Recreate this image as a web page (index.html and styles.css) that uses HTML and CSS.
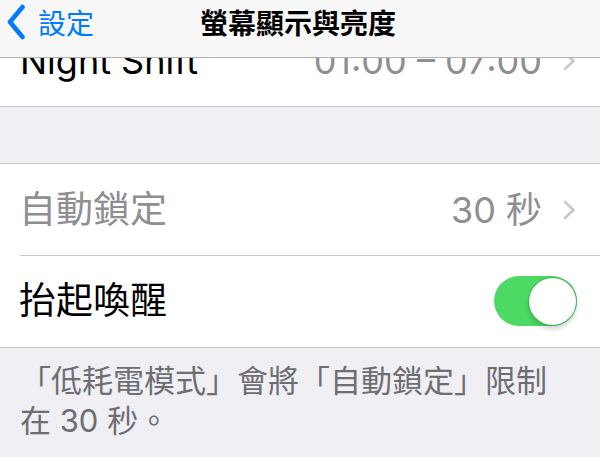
FILE: index.html
```html
<!DOCTYPE html>
<html lang="zh-Hant">
<head>
<meta charset="utf-8">
<title>螢幕顯示與亮度</title>
<link rel="stylesheet" href="styles.css">
</head>
<body>
<div class="screen">
  <header class="navbar">
    <a class="back" href="#">
      <svg class="back-chevron" width="20" height="36" viewBox="0 0 20 36" aria-hidden="true">
        <path d="M16.5 3 L4 18 L16.5 33" fill="none" stroke="#007aff" stroke-width="4.6" stroke-linecap="round" stroke-linejoin="round"/>
      </svg>
      <span>設定</span>
    </a>
    <h1 class="title">螢幕顯示與亮度</h1>
    <div class="spacer"></div>
  </header>

  <main class="content">
    <section class="group group-first">
      <div class="row">
        <span class="label">Night Shift</span>
        <span class="value">01:00 – 07:00</span>
        <svg class="chevron" width="13" height="20" viewBox="0 0 13 20" aria-hidden="true">
          <path d="M2 2 L10.5 10 L2 18" fill="none" stroke="#c7c7cc" stroke-width="2.6" stroke-linecap="round" stroke-linejoin="round"/>
        </svg>
      </div>
    </section>

    <section class="group">
      <div class="row">
        <span class="label label-cjk label-disabled">自動鎖定</span>
        <span class="value">30 秒</span>
        <svg class="chevron" width="13" height="20" viewBox="0 0 13 20" aria-hidden="true">
          <path d="M2 2 L10.5 10 L2 18" fill="none" stroke="#c7c7cc" stroke-width="2.6" stroke-linecap="round" stroke-linejoin="round"/>
        </svg>
      </div>
      <div class="row">
        <span class="label label-cjk">抬起喚醒</span>
        <span class="switch on"><span class="knob"></span></span>
      </div>
    </section>

    <p class="footer">「低耗電模式」會將「自動鎖定」限制<br>在 30 秒。</p>
  </main>
</div>
</body>
</html>
```

FILE: styles.css
```css
* {
  box-sizing: border-box;
}

html, body {
  margin: 0;
  padding: 0;
}

body {
  width: 600px;
  height: 457px;
  overflow: hidden;
  background: #efeff4;
  font-family: Inter, "Noto Sans CJK TC", sans-serif;
  color: #000;
}

.screen {
  position: relative;
  width: 600px;
  height: 457px;
  overflow: hidden;
  background: #efeff4;
}

/* Navigation bar overlays the scrolled content */
.navbar {
  position: absolute;
  top: 0;
  left: 0;
  right: 0;
  height: 58px;
  z-index: 2;
  display: grid;
  grid-template-columns: 1fr auto 1fr;
  align-items: center;
  padding: 0 0 14px 0;
  background: #f7f7f7;
  border-bottom: 1px solid #b2b2b2;
}

.back {
  display: flex;
  align-items: center;
  gap: 12px;
  padding-left: 6px;
  color: #007aff;
  text-decoration: none;
  font-family: "Noto Sans CJK TC", sans-serif;
  font-size: 28px;
  line-height: 36px;
}

.back-chevron {
  display: block;
}

.title {
  margin: 0;
  font-family: "Noto Sans CJK TC", sans-serif;
  font-size: 28px;
  font-weight: 600;
  line-height: 36px;
  text-align: center;
  padding-right: 4px;
}

.content {
  padding-top: 15px;
}

.group {
  background: #fff;
  border-top: 1px solid #c8c7cc;
  border-bottom: 1px solid #c8c7cc;
}

.group-first {
  border-top: none;
  margin-bottom: 56px;
}

.row {
  position: relative;
  display: flex;
  align-items: center;
  height: 91px;
  padding: 0 24px 0 20px;
}

.row + .row {
  height: 92px;
}

.row + .row::before {
  content: "";
  position: absolute;
  top: 0;
  left: 20px;
  right: 0;
  border-top: 1px solid #c8c7cc;
}

.label {
  flex: 1;
  font-size: 36px;
  line-height: 44px;
  white-space: nowrap;
}

.label-cjk {
  font-size: 37px;
  margin-left: -1px;
}

.label-disabled {
  color: #8e8e93;
}

.value {
  font-size: 36px;
  line-height: 44px;
  color: #8e8e93;
  margin-right: 21px;
  white-space: nowrap;
}

.chevron {
  display: block;
}

.switch {
  display: flex;
  align-items: center;
  justify-content: flex-end;
  width: 83px;
  height: 50px;
  border-radius: 25px;
  padding: 0 1.5px;
  background: #4cd964;
  margin-right: -1px;
}

.knob {
  width: 47px;
  height: 47px;
  border-radius: 50%;
  background: #fff;
  box-shadow: 0 0 0 1px rgba(40, 170, 60, 0.55), 0 4px 5px rgba(0, 0, 0, 0.18);
}

.footer {
  margin: 0;
  padding: 13px 20px 0 20px;
  font-family: Inter, "Noto Sans CJK TC", sans-serif;
  font-size: 31px;
  line-height: 40px;
  color: #6d6d72;
}
```
